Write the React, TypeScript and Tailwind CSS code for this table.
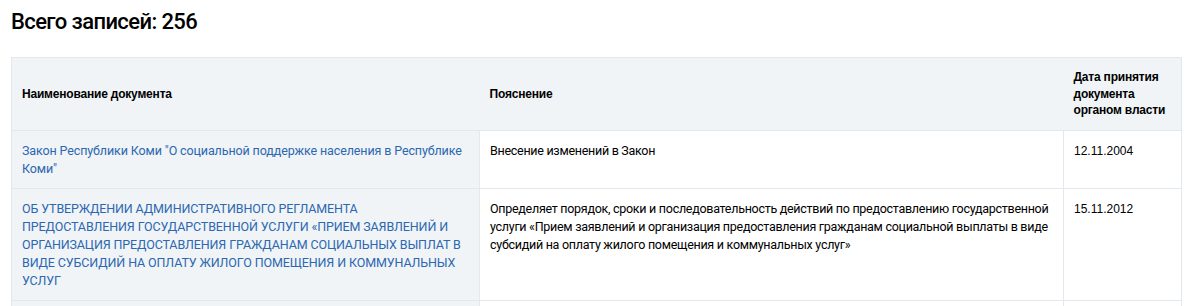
import React from "react";

const rows = [
  {
    name: 'Закон Республики Коми "О социальной поддержке населения в Республике Коми"',
    note: "Внесение изменений в Закон",
    date: "12.11.2004",
  },
  {
    name: "ОБ УТВЕРЖДЕНИИ АДМИНИСТРАТИВНОГО РЕГЛАМЕНТА ПРЕДОСТАВЛЕНИЯ ГОСУДАРСТВЕННОЙ УСЛУГИ «ПРИЕМ ЗАЯВЛЕНИЙ И ОРГАНИЗАЦИЯ ПРЕДОСТАВЛЕНИЯ ГРАЖДАНАМ СОЦИАЛЬНЫХ ВЫПЛАТ В ВИДЕ СУБСИДИЙ НА ОПЛАТУ ЖИЛОГО ПОМЕЩЕНИЯ И КОММУНАЛЬНЫХ УСЛУГ",
    note: "Определяет порядок, сроки и последовательность действий по предоставлению государственной услуги «Прием заявлений и организация предоставления гражданам социальной выплаты в виде субсидий на оплату жилого помещения и коммунальных услуг»",
    date: "15.11.2012",
  },
];

const arial = { fontFamily: '"Liberation Sans", Arial, sans-serif' };

export default function App() {
  return (
    <div className="bg-white min-h-screen pl-[11px] pr-[8px] pt-[9px]" style={{ fontFamily: "Roboto, sans-serif" }}>
      <h1 className="text-[22px] leading-[26px] font-medium text-black tracking-[-0.6px] mb-[22px]">
        Всего записей: 256
      </h1>
      <table className="w-[1170px] border-collapse table-fixed border border-[#e3e8ee]">
        <colgroup>
          <col className="w-[468px]" />
          <col className="w-[584px]" />
          <col className="w-[118px]" />
        </colgroup>
        <thead>
          <tr className="bg-[#f0f4f7]">
            {["Наименование документа", "Пояснение", "Дата принятия документа органом власти"].map((h) => (
              <th
                key={h}
                className="text-left align-middle font-bold text-[12px] leading-[16.5px] tracking-[-0.2px] text-black px-[10px] py-[11px]"
                style={arial}
              >
                {h}
              </th>
            ))}
          </tr>
        </thead>
        <tbody>
          {rows.map((r) => (
            <tr key={r.date}>
              <td className="bg-[#f0f4f7] border-t border-[#e3e8ee] align-top px-[10px] pt-[11px] pb-[10px] text-[12.5px] leading-[18px] tracking-[-0.12px] text-[#2c67b0]">
                <a href="#" className="text-[#2c67b0]">{r.name}</a>
              </td>
              <td className="bg-white border-t border-l border-[#e3e8ee] align-top px-[10px] pt-[11px] pb-[10px] text-[12.5px] leading-[18px] tracking-[-0.28px] text-black">
                {r.note}
              </td>
              <td
                className="bg-white border-t border-l border-[#e3e8ee] align-top px-[10px] pt-[11px] pb-[10px] text-[12px] leading-[18px] text-black"
                style={arial}
              >
                {r.date}
              </td>
            </tr>
          ))}
          <tr>
            <td className="bg-[#f0f4f7] border-t border-[#e3e8ee] h-[40px]" />
            <td className="bg-white border-t border-l border-[#e3e8ee] h-[40px]" />
            <td className="bg-white border-t border-l border-[#e3e8ee] h-[40px]" />
          </tr>
        </tbody>
      </table>
    </div>
  );
}
